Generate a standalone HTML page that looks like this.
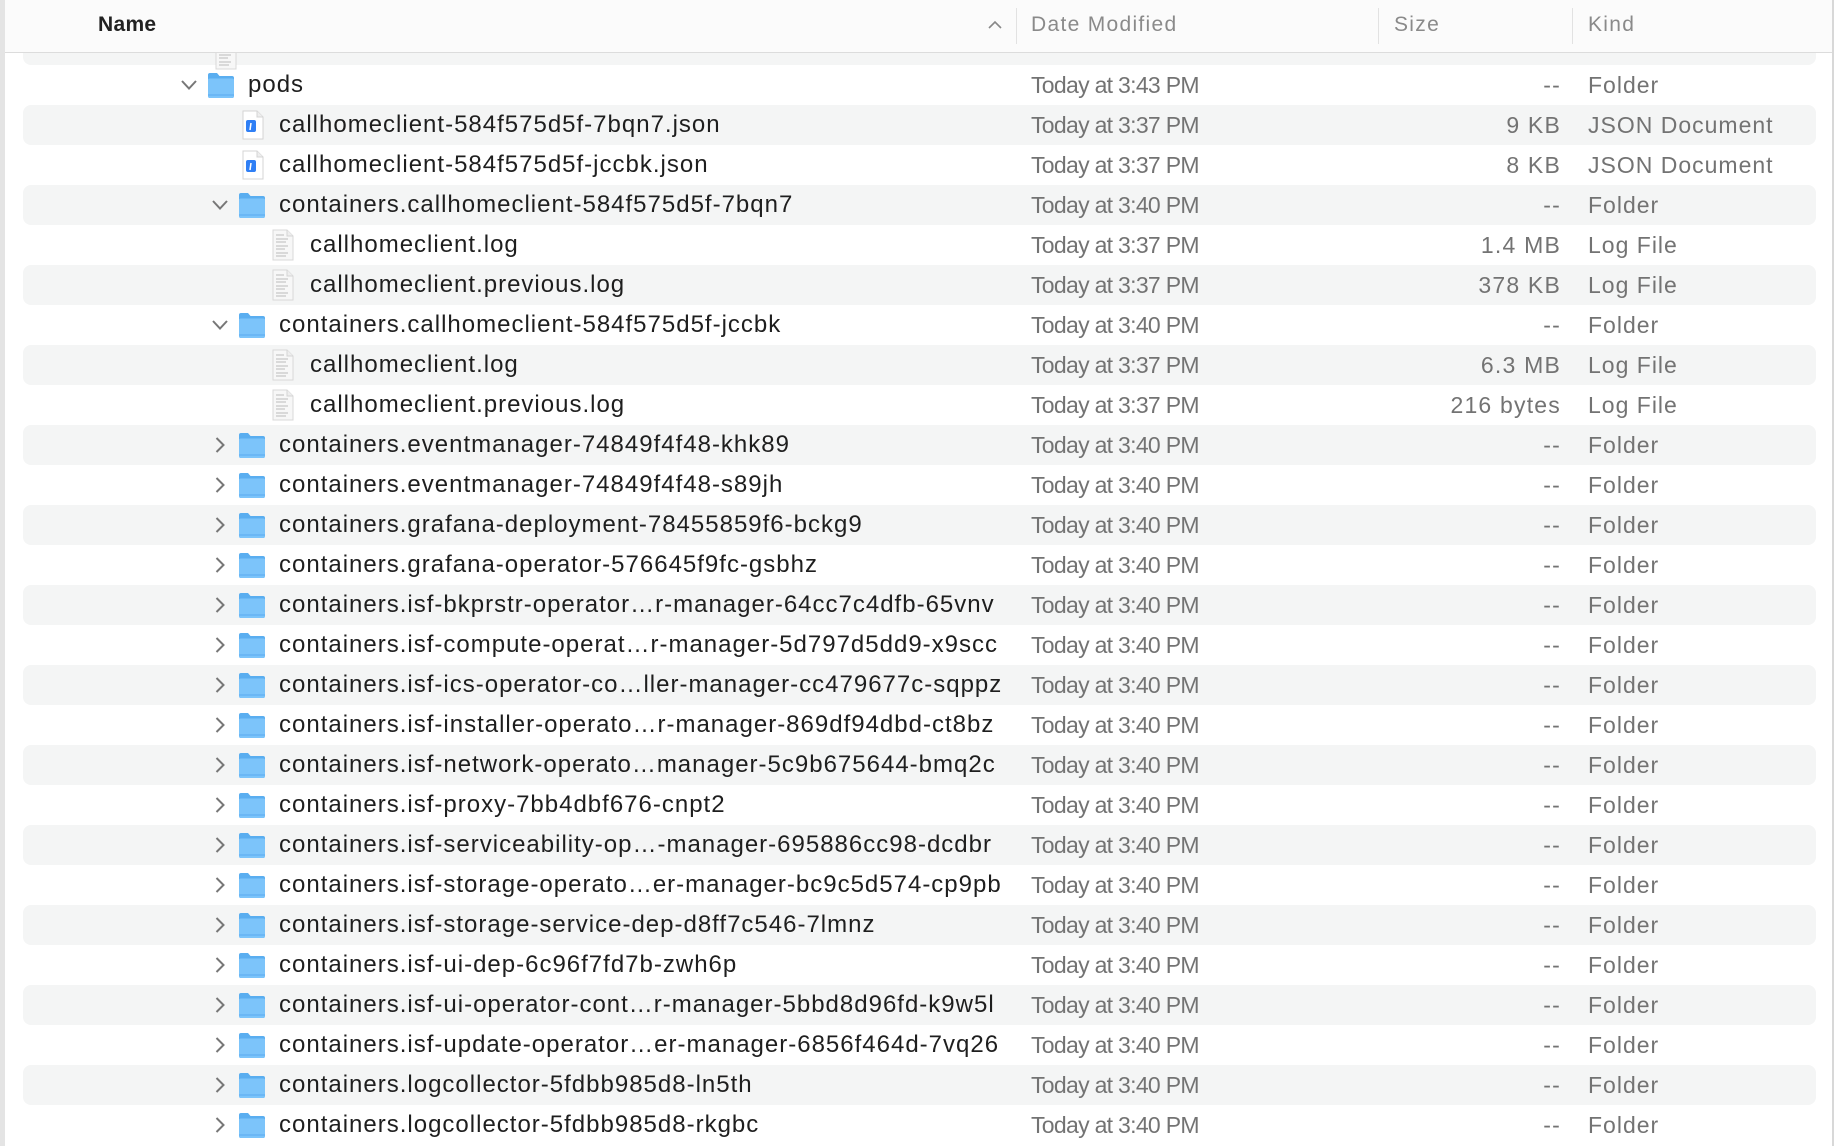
<!DOCTYPE html>
<html><head><meta charset="utf-8"><style>
*{margin:0;padding:0;box-sizing:border-box}
body{width:1838px;height:1146px;overflow:hidden;background:#fff;font-family:"Liberation Sans",Arial,sans-serif;position:relative}
.lb{position:absolute;left:0;top:0;width:5px;height:1146px;background:#e4e4e4}
.rb{position:absolute;left:1832px;top:0;width:2px;height:1146px;background:#d8d8d8}
.hdr{position:absolute;left:5px;top:0;width:1827px;height:53px;background:#fbfbfb;border-bottom:1.5px solid #dcdcdc;z-index:5}
.hdr span{position:absolute;top:13px;font-size:21px;color:#8a8a8a;letter-spacing:1.3px}
.hdr .dv{position:absolute;top:8px;width:1px;height:36px;background:#e2e2e2}
.row{position:absolute;left:23px;width:1793px;height:40px;border-radius:8px}
.s{background:#f4f5f5}
.t{position:absolute;font-size:23px;line-height:40px;white-space:nowrap}
.n{color:#1e1e1e;font-size:24px;letter-spacing:1px}
.g{color:#737373}
.dt{letter-spacing:-0.7px}
.kd{letter-spacing:1px}
.sz{text-align:right;width:300px;left:1261px;letter-spacing:1.2px}
svg{position:absolute}
</style></head><body>
<div class="lb"></div><div class="rb"></div>
<div class="hdr">
<span style="left:93px;color:#222;font-weight:bold;letter-spacing:0.3px">Name</span>
<svg style="left:982px;top:19px" width="16" height="12" viewBox="0 0 16 12"><path d="M2 9 L8 3 L14 9" fill="none" stroke="#888" stroke-width="1.6"/></svg>
<div class="dv" style="left:1011px"></div>
<span style="left:1026px">Date Modified</span>
<div class="dv" style="left:1373px"></div>
<span style="left:1389px">Size</span>
<div class="dv" style="left:1567px"></div>
<span style="left:1583px">Kind</span>
</div>
<div id="rows"></div>
<script>
var F='<svg width="30" height="27" viewBox="0 0 30 27" style="left:X;top:Y"><path d="M2 3 Q2 1 4 1 L11 1 L13.5 4 L26 4 Q28 4 28 6 L28 24 Q28 26 26 26 L4 26 Q2 26 2 24 Z" fill="#5aaef0"/><path d="M2 8 Q2 6.5 4 6.5 L26 6.5 Q28 6.5 28 8 L28 24 Q28 26 26 26 L4 26 Q2 26 2 24 Z" fill="#7cc4fa"/><path d="M2 23 L28 23" stroke="#5aaaf0" stroke-width="1"/></svg>';
var J='<svg width="26" height="30" viewBox="0 0 26 30" style="left:X;top:Y"><path d="M3 1 L17 1 L23 7 L23 29 L3 29 Z" fill="#fff" stroke="#d4d4d4"/><path d="M17 1 L17 7 L23 7" fill="#eee" stroke="#d4d4d4"/><rect x="6" y="10" width="10" height="12" rx="2" fill="#2f7ff5"/><path d="M11 13 L10 20" stroke="#fff" stroke-width="1.5"/></svg>';
var L='<svg width="26" height="32" viewBox="0 0 26 32" style="left:X;top:Y"><path d="M3 1 L17 1 L23 7 L23 31 L3 31 Z" fill="#f7f7f7" stroke="#d8d8d8"/><path d="M17 1 L17 7 L23 7" fill="#eee" stroke="#d4d4d4"/><g stroke="#bbb" stroke-width="1"><path d="M6 6h8M6 10h12M6 13h10M6 17h12M6 20h9M6 24h12M6 27h10"/></g></svg>';
var CD='<svg width="18" height="12" viewBox="0 0 18 12" style="left:X;top:Y"><path d="M2 2 L9 9.5 L16 2" fill="none" stroke="#777" stroke-width="2"/></svg>';
var CR='<svg width="12" height="18" viewBox="0 0 12 18" style="left:X;top:Y"><path d="M2.5 2 L9.5 9 L2.5 16" fill="none" stroke="#777" stroke-width="2"/></svg>';
var d7='Today at 3:37 PM',d0='Today at 3:40 PM';
var R=[
[1,'F','d','pods','Today at 3:43 PM','--','Folder'],
[2,'J','','callhomeclient-584f575d5f-7bqn7.json',d7,'9 KB','JSON Document'],
[2,'J','','callhomeclient-584f575d5f-jccbk.json',d7,'8 KB','JSON Document'],
[2,'F','d','containers.callhomeclient-584f575d5f-7bqn7',d0,'--','Folder'],
[3,'L','','callhomeclient.log',d7,'1.4 MB','Log File'],
[3,'L','','callhomeclient.previous.log',d7,'378 KB','Log File'],
[2,'F','d','containers.callhomeclient-584f575d5f-jccbk',d0,'--','Folder'],
[3,'L','','callhomeclient.log',d7,'6.3 MB','Log File'],
[3,'L','','callhomeclient.previous.log',d7,'216 bytes','Log File']];
['containers.eventmanager-74849f4f48-khk89','containers.eventmanager-74849f4f48-s89jh','containers.grafana-deployment-78455859f6-bckg9','containers.grafana-operator-576645f9fc-gsbhz','containers.isf-bkprstr-operator…r-manager-64cc7c4dfb-65vnv','containers.isf-compute-operat…r-manager-5d797d5dd9-x9scc','containers.isf-ics-operator-co…ller-manager-cc479677c-sqppz','containers.isf-installer-operato…r-manager-869df94dbd-ct8bz','containers.isf-network-operato…manager-5c9b675644-bmq2c','containers.isf-proxy-7bb4dbf676-cnpt2','containers.isf-serviceability-op…-manager-695886cc98-dcdbr','containers.isf-storage-operato…er-manager-bc9c5d574-cp9pb','containers.isf-storage-service-dep-d8ff7c546-7lmnz','containers.isf-ui-dep-6c96f7fd7b-zwh6p','containers.isf-ui-operator-cont…r-manager-5bbd8d96fd-k9w5l','containers.isf-update-operator…er-manager-6856f464d-7vq26','containers.logcollector-5fdbb985d8-ln5th','containers.logcollector-5fdbb985d8-rkgbc'].forEach(function(n){R.push([2,'F','r',n,d0,'--','Folder'])});
var h='<div class="row s" style="top:25px"></div>'+L.replace('X','213px').replace('Y','38px');
R.forEach(function(r,i){
 var top=65+40*i,c=top+20,lv=r[0];
 var ix=206+(lv-1)*31, tx=248+(lv-1)*31;
 if(i%2==1)h+='<div class="row s" style="top:'+top+'px"></div>';
 if(r[2]=='d')h+=CD.replace('X',(ix-26)+'px').replace('Y',(c-6)+'px');
 if(r[2]=='r')h+=CR.replace('X',(ix-23)+'px').replace('Y',(c-9)+'px');
 var ic=r[1]=='F'?F.replace('X',ix+'px').replace('Y',(c-13)+'px'):r[1]=='J'?J.replace('X',(ix+3)+'px').replace('Y',(c-15)+'px'):L.replace('X',(ix+2)+'px').replace('Y',(c-16)+'px');
 h+=ic;
 h+='<div class="t n" style="left:'+tx+'px;top:'+top+'px">'+r[3]+'</div>';
 h+='<div class="t g dt" style="left:1031px;top:'+top+'px">'+r[4]+'</div>';
 h+='<div class="t g sz" style="top:'+top+'px">'+r[5]+'</div>';
 h+='<div class="t g kd" style="left:1588px;top:'+top+'px">'+r[6]+'</div>';
});
document.getElementById('rows').innerHTML=h;
</script>
</body></html>
